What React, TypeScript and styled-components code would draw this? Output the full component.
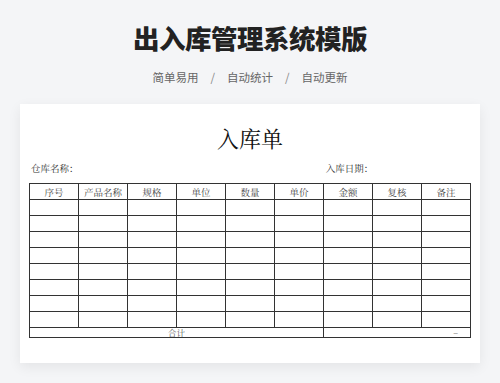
import React from 'react';
import styled, { createGlobalStyle } from 'styled-components';

const GlobalStyle = createGlobalStyle`
  html, body {
    margin: 0;
    padding: 0;
    background: #f4f5f7;
  }
`;

const Page = styled.div`
  width: 500px;
  height: 383px;
  overflow: hidden;
  display: flex;
  flex-direction: column;
  align-items: center;
  font-family: 'Noto Sans CJK SC', sans-serif;
`;

const Heading = styled.h1`
  margin: 24px 0 0;
  font-size: 26.5px;
  line-height: 28px;
  font-weight: 900;
  color: #222;
  letter-spacing: -0.5px;
`;

const Tagline = styled.div`
  margin-top: 19px;
  display: flex;
  gap: 12px;
  font-size: 11.5px;
  line-height: 13px;
  color: #666;
`;

const Slash = styled.span`
  color: #888;
`;

const Sheet = styled.div`
  margin-top: 20px;
  width: 460px;
  height: 259px;
  box-sizing: border-box;
  padding: 0 9px;
  background: #fff;
  box-shadow: 0 4px 12px rgba(0, 0, 0, 0.07);
  font-family: 'Noto Serif CJK SC', 'Noto Sans CJK SC', serif;
`;

const SheetTitle = styled.div`
  margin-top: 23px;
  text-align: center;
  font-size: 22px;
  line-height: 22px;
  color: #111;
`;

const MetaRow = styled.div`
  margin-top: 13px;
  display: grid;
  grid-template-columns: 6fr 3fr;
  font-size: 9.5px;
  line-height: 12px;
  color: #333;

  span {
    padding-left: 2px;
  }
`;

const Grid = styled.table`
  margin-top: 9px;
  width: 442px;
  border-collapse: collapse;
  table-layout: fixed;
  border: 1.5px solid #333;

  th, td {
    border: 1px solid #333;
    padding: 0;
    text-align: center;
    font-weight: 400;
    color: #444;
  }

  th {
    height: 15px;
    font-size: 9.5px;
    line-height: 12px;
  }

  td {
    height: 15px;
  }
`;

const TotalCell = styled.td<{ $align?: 'center' | 'right' }>`
  && {
    height: 9px;
    font-size: 8.5px;
    line-height: 9px;
    color: #555;
    text-align: ${p => p.$align ?? 'center'};
    padding-right: ${p => (p.$align === 'right' ? '12px' : '0')};
  }
`;

const columns = ['序号', '产品名称', '规格', '单位', '数量', '单价', '金额', '复核', '备注'];
const rows = Array.from({ length: 8 }, (_, i) => i);

export default function App() {
  return (
    <>
      <GlobalStyle />
      <Page>
        <Heading>出入库管理系统模版</Heading>
        <Tagline>
          <span>简单易用</span>
          <Slash>/</Slash>
          <span>自动统计</span>
          <Slash>/</Slash>
          <span>自动更新</span>
        </Tagline>
        <Sheet>
          <SheetTitle>入库单</SheetTitle>
          <MetaRow>
            <span>仓库名称：</span>
            <span>入库日期：</span>
          </MetaRow>
          <Grid>
            <thead>
              <tr>
                {columns.map(c => (
                  <th key={c}>{c}</th>
                ))}
              </tr>
            </thead>
            <tbody>
              {rows.map(r => (
                <tr key={r}>
                  {columns.map(c => (
                    <td key={c} />
                  ))}
                </tr>
              ))}
              <tr>
                <TotalCell colSpan={6}>合计</TotalCell>
                <TotalCell colSpan={3} $align="right">–</TotalCell>
              </tr>
            </tbody>
          </Grid>
        </Sheet>
      </Page>
    </>
  );
}
